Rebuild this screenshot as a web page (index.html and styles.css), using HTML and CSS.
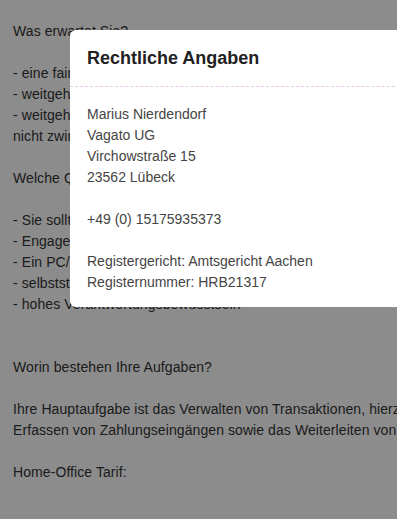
FILE: index.html
```html
<!DOCTYPE html>
<html lang="de">
<head>
  <meta charset="UTF-8">
  <title>Stellenangebot</title>
  <link rel="stylesheet" href="styles.css">
</head>
<body>
  <div class="job-text">
    Was erwartet Sie?<br>
    <br>
    - eine faire Bezahlung nach Stunden<br>
    - weitgehend freie Zeiteinteilung<br>
    - weitgehend freie Arbeitsplatzwahl, ein Umzug ist<br>
    nicht zwingend erforderlich<br>
    <br>
    Welche Qualifikationen sollten Sie mitbringen?<br>
    <br>
    - Sie sollten volljährig sein<br>
    - Engagement und Zuverlässigkeit<br>
    - Ein PC/Laptop mit Internetzugang<br>
    - selbstständige Arbeitsweise<br>
    - hohes Verantwortungsbewusstsein<br>
    <br>
    <br>
    Worin bestehen Ihre Aufgaben?<br>
    <br>
    Ihre Hauptaufgabe ist das Verwalten von Transaktionen, hierzu gehört das<br>
    Erfassen von Zahlungseingängen sowie das Weiterleiten von Zahlungen.<br>
    <br>
    Home-Office Tarif:
  </div>

  <div class="overlay"></div>

  <div class="modal">
    <div class="modal-header">
      <h2>Rechtliche Angaben</h2>
    </div>
    <div class="modal-body">
      Marius Nierdendorf<br>
      Vagato UG<br>
      Virchowstraße 15<br>
      23562 Lübeck<br>
      <br>
      +49 (0) 15175935373<br>
      <br>
      Registergericht: Amtsgericht Aachen<br>
      Registernummer: HRB21317
    </div>
  </div>
</body>
</html>
```

FILE: styles.css
```css
html {
  overflow: hidden;
}

body {
  font-family: "Liberation Sans", Arial, sans-serif;
  background: #fff;
  margin: 0;
  padding: 0;
}

.job-text {
  padding: 21px 13px;
  font-size: 14px;
  line-height: 21px;
  letter-spacing: 0.08px;
  color: #333;
  white-space: nowrap;
}

.overlay {
  position: fixed;
  top: 0;
  left: 0;
  right: 0;
  bottom: 0;
  background: rgba(0, 0, 0, 0.45);
}

.modal {
  position: fixed;
  top: 30px;
  left: 70px;
  width: 420px;
  background: #fff;
  border-radius: 6px;
  white-space: nowrap;
}

.modal-header {
  padding: 16px 17px;
  border-bottom: 1px dashed #e6c9e6;
}

.modal-header h2 {
  margin: 0;
  font-size: 18px;
  line-height: 24px;
  color: #222;
}

.modal-body {
  padding: 17px 17px 14px;
  font-size: 14px;
  line-height: 21px;
  color: #444;
}
```
